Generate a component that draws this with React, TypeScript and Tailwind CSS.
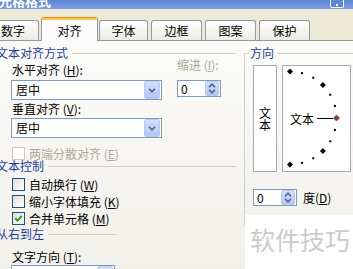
import React from "react";

const font = "font-['Noto_Sans_CJK_SC','Noto_Sans',sans-serif]";

function Chevron({ up = false }: { up?: boolean }) {
  return (
    <svg width="8" height="5" viewBox="0 0 8 5">
      <path
        d={up ? "M1 4.2 L4 1.2 L7 4.2" : "M1 0.8 L4 3.8 L7 0.8"}
        fill="none"
        stroke="#4d6185"
        strokeWidth="1.6"
      />
    </svg>
  );
}

function Combo({ value, width }: { value: string; width: string }) {
  return (
    <div className={`${width} h-[20px] flex items-center border border-[#7f9db9] bg-white`}>
      <span className="flex-1 pl-[4px] text-[12px] leading-[12px] whitespace-nowrap overflow-hidden">{value}</span>
      <div className="w-[16px] h-[18px] mr-px flex items-center justify-center rounded-[2px] border border-[#b9c9ef] bg-gradient-to-b from-[#d3defb] to-[#b2c6f4]">
        <Chevron />
      </div>
    </div>
  );
}

function Spin({ value, width }: { value: string; width: string }) {
  return (
    <div className={`${width} h-[17px] flex items-center border border-[#7f9db9] bg-white`}>
      <span className="flex-1 pl-[3px] text-[12px] leading-[12px]">{value}</span>
      <div className="w-[14px] h-[15px] mr-px flex flex-col items-center justify-center gap-[1px] rounded-[2px] border border-[#b9c9ef] bg-gradient-to-b from-[#d3defb] to-[#b2c6f4]">
        <Chevron up />
        <Chevron />
      </div>
    </div>
  );
}

function Check({
  label,
  checked = false,
  disabled = false,
  className = "",
}: {
  label: React.ReactNode;
  checked?: boolean;
  disabled?: boolean;
  className?: string;
}) {
  return (
    <div className={`flex items-center h-[13px] ${className}`}>
      <div
        className={`w-[13px] h-[13px] border flex items-center justify-center ${
          disabled
            ? "border-[#cac8bb] bg-white"
            : "border-[#1c5180] bg-gradient-to-br from-[#dcdcd7] to-white"
        }`}
      >
        {checked && (
          <svg width="11" height="11" viewBox="0 0 11 11">
            <path d="M2.2 5.2 L4.4 7.6 L8.8 3" fill="none" stroke="#21a121" strokeWidth="1.9" />
          </svg>
        )}
      </div>
      <span className={`ml-[4px] text-[12px] leading-[12px] whitespace-nowrap ${disabled ? "text-[#aca899]" : "text-black"}`}>
        {label}
      </span>
    </div>
  );
}

function GroupHeader({ label, className = "" }: { label: string; className?: string }) {
  return (
    <div className={`flex items-center h-[12px] ${className}`}>
      <span className="ml-[-4px] text-[12px] leading-[12px] text-[#1f3c9c] whitespace-nowrap">{label}</span>
      <div className="flex-1 h-px bg-[#d0d0bf] ml-[4px]" />
    </div>
  );
}

function Key({ k }: { k: string }) {
  return (
    <>
      (<span className="underline">{k}</span>)
    </>
  );
}

function Dial() {
  const cx = 7;
  const cy = 52;
  const r = 46.5;
  const marks = [];
  for (let a = 90; a >= -90; a -= 15) {
    const rad = (a * Math.PI) / 180;
    const x = cx + r * Math.cos(rad);
    const y = cy - r * Math.sin(rad);
    if (a % 45 === 0) {
      const s = 3;
      marks.push(
        <path
          key={a}
          d={`M${x} ${y - s} L${x + s} ${y} L${x} ${y + s} L${x - s} ${y} Z`}
          fill={a === 0 ? "#8b3b3b" : "#000"}
          stroke={a === 0 ? "#5a2020" : "none"}
          strokeWidth="0.5"
        />
      );
    } else {
      marks.push(<rect key={a} x={x - 1} y={y - 1} width="2" height="2" fill="#000" />);
    }
  }
  return (
    <svg width="67" height="105" viewBox="0 0 67 105">
      {marks}
      <text x="7" y="52" dominantBaseline="central" fontSize="12" fontFamily="Noto Sans CJK SC, sans-serif" fill="#000">
        文本
      </text>
      <line x1="34" y1="52.5" x2="50" y2="52.5" stroke="#000" strokeWidth="1" />
    </svg>
  );
}

export default function App() {
  const tabs = [
    { label: "数字", cls: "w-[52px] ml-[-13px]" },
    { label: "对齐", cls: "w-[57px] ml-[2px]", active: true },
    { label: "字体", cls: "w-[49px] ml-[1px]" },
    { label: "边框", cls: "w-[51px] ml-[3px]" },
    { label: "图案", cls: "w-[51px] ml-[3px]" },
    { label: "保护", cls: "w-[51px] ml-[3px]" },
  ];

  return (
    <div className={`relative w-[353px] h-[269px] overflow-hidden bg-[#ece9d8] text-black ${font}`}>
      {/* title bar */}
      <div className="h-[9px] flex items-start overflow-hidden bg-gradient-to-b from-[#5d84d6] to-[#7d9fe0]">
        <span className="ml-[-14px] mt-[-6px] text-[13px] leading-[13px] font-bold text-white whitespace-nowrap">
          单元格格式
        </span>
        <div className="ml-auto mr-[9px] w-[14px] h-[8px] rounded-b-[2px] border border-t-0 border-white bg-[#5b86dc] flex justify-center items-end pb-[1px]">
          <div className="w-[2px] h-[2px] bg-white" />
        </div>
      </div>

      {/* tabs */}
      <div className="h-[31px] flex items-end">
        {tabs.map((t) =>
          t.active ? (
            <div
              key={t.label}
              className={`${t.cls} h-[24px] -mb-px relative z-10 flex flex-col rounded-t-[3px] border-x border-[#919b9c] bg-[#fcfcfe] overflow-hidden`}
            >
              <div className="h-px bg-[#e68b2c]" />
              <div className="h-[2px] bg-[#ffc73c]" />
              <div className="flex-1 flex items-center justify-center text-[12px] leading-[12px]">{t.label}</div>
            </div>
          ) : (
            <div
              key={t.label}
              className={`${t.cls} h-[20px] shrink-0 flex items-center justify-center rounded-t-[3px] border border-b-0 border-[#919b9c] bg-gradient-to-b from-white to-[#ecebe5] text-[12px] leading-[12px]`}
            >
              {t.label}
            </div>
          )
        )}
      </div>

      {/* panel */}
      <div className="h-[229px] flex border-t border-[#919b9c] bg-gradient-to-b from-[#fbfbf9] to-[#f1f0ea]">
        <div className="w-[236px] shrink-0 flex flex-col">
          <GroupHeader label="文本对齐方式" className="mt-[6px]" />
          <div className="flex">
            <div className="ml-[11px] w-[151px] flex flex-col">
              <div className="mt-[5px] pl-px text-[12px] leading-[12px]">
                水平对齐 <Key k="H" />:
              </div>
              <div className="mt-[4px]">
                <Combo value="居中" width="w-[151px]" />
              </div>
              <div className="mt-[3px] pl-px text-[12px] leading-[12px]">
                垂直对齐 <Key k="V" />:
              </div>
              <div className="mt-[3px]">
                <Combo value="居中" width="w-[151px]" />
              </div>
              <Check
                className="mt-[9px] pl-px"
                disabled
                label={
                  <>
                    两端分散对齐 <Key k="E" />
                  </>
                }
              />
            </div>
            <div className="ml-[15px] w-[44px] flex flex-col">
              <div className="text-[12px] leading-[12px] text-[#aca899] whitespace-nowrap">
                缩进 <Key k="I" />:
              </div>
              <div className="mt-[9px]">
                <Spin value="0" width="w-[44px]" />
              </div>
            </div>
          </div>

          <GroupHeader label="文本控制" />
          <Check
            className="mt-[6px] pl-[12px]"
            label={
              <>
                自动换行 <Key k="W" />
              </>
            }
          />
          <Check
            className="mt-[4px] pl-[12px]"
            label={
              <>
                缩小字体填充 <Key k="K" />
              </>
            }
          />
          <Check
            className="mt-[4px] pl-[12px]"
            checked
            label={
              <>
                合并单元格 <Key k="M" />
              </>
            }
          />

          <GroupHeader label="从右到左" className="mt-[3px] w-[116px]" />
          <div className="mt-[11px] pl-[12px] text-[12px] leading-[12px]">
            文字方向 <Key k="T" />:
          </div>
          <div className="mt-[2px] pl-[11px]">
            <Combo value="根据内容" width="w-[104px]" />
          </div>
        </div>

        {/* orientation group */}
        <div className="ml-[8px] mt-[12px] h-[172px] flex-1 border-l border-[#d0d0bf] flex flex-col">
          <div className="-mt-[6px] h-[12px] flex items-center">
            <div className="w-[4px] h-px bg-[#d0d0bf]" />
            <span className="ml-px text-[12px] leading-[12px] text-[#1f3c9c]">方向</span>
            <div className="flex-1 ml-[3px] h-px bg-[#d0d0bf]" />
          </div>
          <div className="mt-[6px] pl-[8px] flex">
            <div className="w-[24px] h-[107px] border border-[#a5a9ae] bg-white flex flex-col items-center justify-center text-[12px] leading-[12px]">
              <span>文</span>
              <span>本</span>
            </div>
            <div className="ml-[5px] w-[69px] h-[107px] border border-[#a5a9ae] bg-white">
              <Dial />
            </div>
          </div>
          <div className="mt-[17px] pl-[8px] flex items-center">
            <Spin value="0" width="w-[44px]" />
            <span className="ml-[6px] text-[12px] leading-[12px]">
              度<Key k="D" />
            </span>
          </div>
        </div>
      </div>

      {/* watermark */}
      <div className="absolute left-[245px] top-[215px] w-[108px] h-[54px] bg-white pl-[5px] pt-[12px]">
        <span className="text-[25px] leading-[25px] text-[#cbcbcb] whitespace-nowrap">软件技巧</span>
      </div>
    </div>
  );
}
